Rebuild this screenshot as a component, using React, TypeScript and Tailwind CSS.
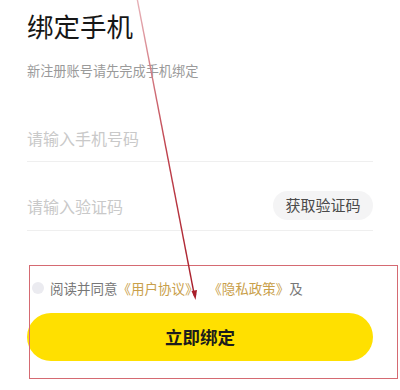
export default function App() {
  return (
    <div
      className="relative w-[400px] h-[390px] overflow-hidden bg-white"
      style={{ fontFamily: '"Noto Sans CJK SC", "Noto Sans", sans-serif' }}
    >
      <div className="px-[27px] pt-[9px]">
        {/* Header */}
        <h1 className="text-[26.5px] leading-[34px] font-normal text-[#161616]">绑定手机</h1>
        <p className="mt-[18px] text-[13.2px] leading-[20px] text-[#9a9a9a]">新注册账号请先完成手机绑定</p>

        {/* Phone input */}
        <div className="mt-[42px] flex h-[39px] items-start border-b border-[#efefef]">
          <span className="flex h-[29px] items-center text-[16px] text-[#c9c9c9]">请输入手机号码</span>
        </div>

        {/* Code input */}
        <div className="flex items-center justify-between border-b border-[#efefef] pt-[29px] pb-[10px]">
          <span className="text-[16px] text-[#c9c9c9]">请输入验证码</span>
          <button className="flex h-[29px] w-[100px] items-center justify-center rounded-full bg-[#f4f4f5] text-[15px] text-[#4a4a4a]">
            获取验证码
          </button>
        </div>

        {/* Agreement */}
        <div className="mt-[47px] flex items-center gap-[6px] pl-[5px]">
          <span className="h-[12px] w-[12px] shrink-0 rounded-full bg-[#ebebf0]" />
          <p className="text-[13.5px] leading-[20px] text-[#777777]">
            阅读并同意<span className="text-[#c9a04a]">《用户协议》</span>、 <span className="text-[#c9a04a]">《隐私政策》</span>及
          </p>
        </div>

        {/* Submit */}
        <button className="mt-[15px] flex h-[48px] w-full items-center justify-center rounded-full bg-[#ffe000] text-[17.5px] font-semibold text-[#1c1c1c]">
          立即绑定
        </button>
      </div>

      {/* Annotation overlay */}
      <div className="pointer-events-none absolute left-[29px] top-[265px] h-[114px] w-[369px] border-[1.5px] border-[#d56a72]" />
      <svg className="pointer-events-none absolute left-0 top-0" width="400" height="390" viewBox="0 0 400 390">
        <defs>
          <linearGradient id="ln" x1="0" y1="0" x2="0" y2="1">
            <stop offset="0" stopColor="#e8b4ba" />
            <stop offset="0.5" stopColor="#c0434e" />
            <stop offset="1" stopColor="#a81e2a" />
          </linearGradient>
        </defs>
        <path d="M137 -2 L194.5 296" stroke="url(#ln)" strokeWidth="1.4" fill="none" />
        <path d="M195.5 300 L191.5 291 L197 290 Z" fill="#a81e2a" />
      </svg>
    </div>
  );
}
